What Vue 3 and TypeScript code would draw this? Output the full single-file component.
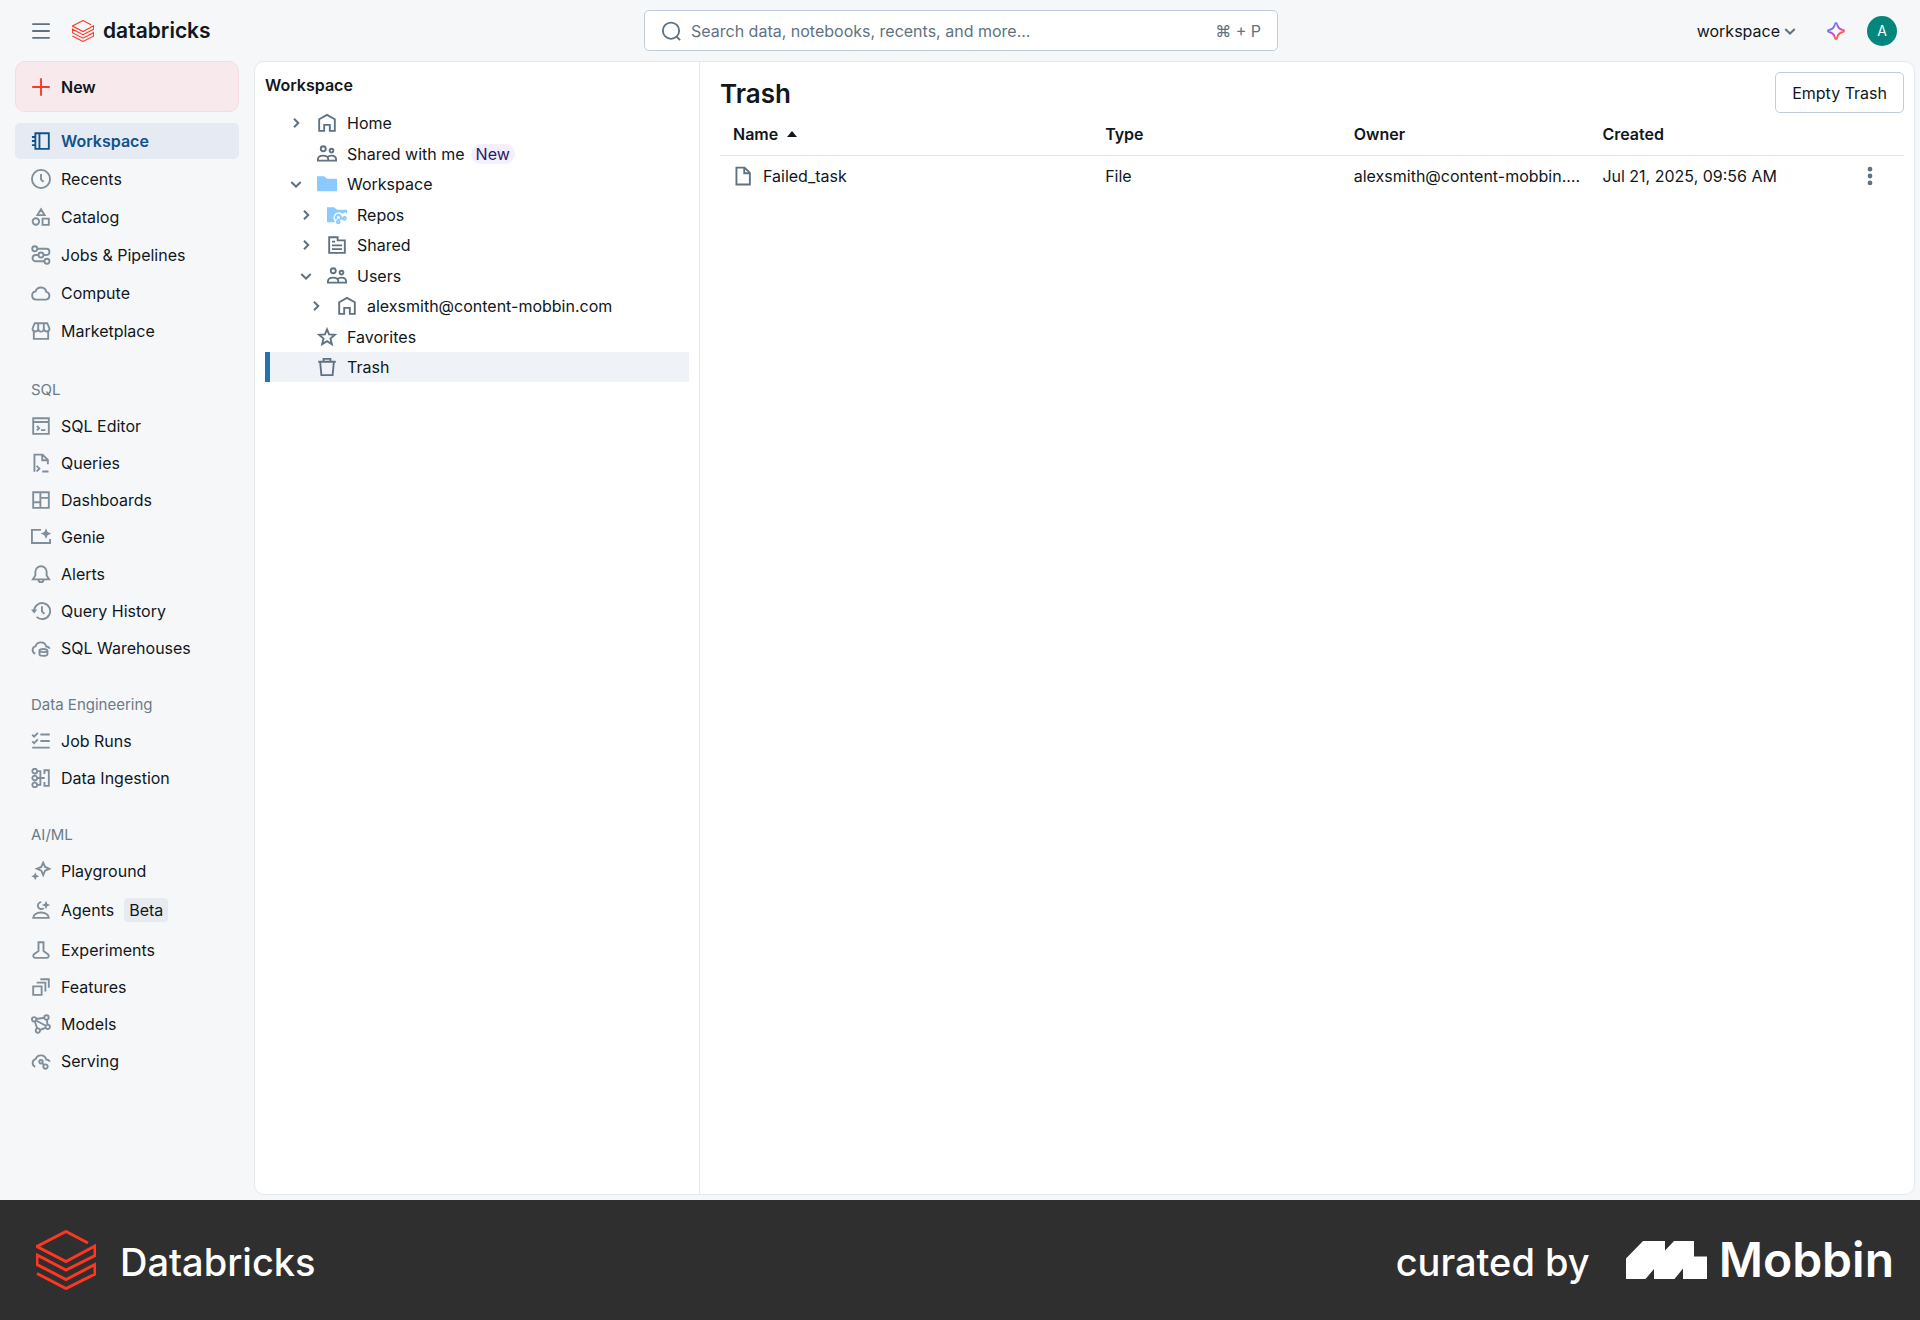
<script setup lang="ts">
import { ref } from 'vue'

interface Glyph {
  stroke?: string
  fill?: string
}
interface NavItem {
  label: string
  icon: string
  badge?: string
}
interface NavSection {
  title: string
  items: NavItem[]
}
interface TreeNode {
  label: string
  icon: string
  depth: number
  open?: boolean
  leaf?: boolean
  tag?: string
}

const ring = (cx: number, cy: number, r: number): string =>
  `M${cx - r} ${cy}a${r} ${r} 0 1 0 ${2 * r} 0a${r} ${r} 0 1 0 ${-2 * r} 0z`

const spark = (cx: number, cy: number, r: number): string => {
  const k = r * 0.3
  return `M${cx} ${cy - r}L${cx + k} ${cy - k}L${cx + r} ${cy}L${cx + k} ${cy + k}L${cx} ${cy + r}L${cx - k} ${cy + k}L${cx - r} ${cy}L${cx - k} ${cy - k}z`
}

const glyphs: Record<string, Glyph> = {
  menu: { stroke: 'M1 2.5h14M1 8h14M1 13.5h14' },
  plus: { stroke: 'M8 1v14M1 8h14' },
  notebook: { stroke: 'M3.5 1.75h10.75v12.5H3.5zM6.75 1.75v12.5M.75 4.75h2.5M.75 8h2.5M.75 11.25h2.5' },
  clock: { stroke: ring(8, 8, 7.25) + 'M8 4v4.25l2 2' },
  catalog: { stroke: 'M8 1.75l2.9 4.75H5.1z' + ring(3.9, 11.6, 2.6) + 'M9.25 9.25h5v5h-5z' },
  jobs: {
    stroke:
      ring(3, 3, 2) + ring(12.75, 13, 2) + ring(8, 8, 2) +
      'M5 3h7.25a2.5 2.5 0 0 1 0 5H10M6 8H3.75a2.5 2.5 0 0 0 0 5h7',
  },
  cloud: { stroke: 'M4 13.25a3.3 3.3 0 0 1-.3-6.55a4.45 4.45 0 0 1 8.6.45a3.1 3.1 0 0 1-.3 6.1z' },
  market: {
    stroke:
      'M3 1.75h10l1.75 4.25a2.25 2.25 0 0 1-4.5 .25a2.25 2.25 0 0 1-4.5 0a2.25 2.25 0 0 1-4.5-.25zM5.75 6.25v-4.5M10.25 6.25v-4.5M2.25 8.5v5.75h11.5V8.5',
  },
  editor: { stroke: 'M1.75 1.75h12.500v12.500H1.750zM1.750 4.750h12.500M4.750 8l1.750 1.750-1.750 1.750M8 11.250h3.500' },
  query: { stroke: 'M2.75 15V1.25h6.5l4.25 4.25V9M9 1.25v4.5h4.5M4.5 10.25L6.75 12.5 4.5 14.75M9 14.75h5' },
  dashboard: { stroke: 'M1.75 1.75h12.5v12.5H1.75zM7.5 1.75v12.5M1.75 9.75H7.5M7.5 6.25h6.75' },
  genie: { stroke: 'M8 2.25H.75v10.5h14.5V9.5', fill: spark(12, 5.25, 4.25) },
  bell: { stroke: 'M1.5 12.25h13l-2-3V6.25a4.5 4.5 0 0 0-9 0v3zM6 12.5a2 2 0 0 0 4 0' },
  history: { stroke: 'M2.5 8a6.4 6.4 0 1 1 2 4.7M8.75 4.25V8.25l2 2', fill: 'M0 6.75h5L2.5 10z' },
  warehouse: {
    stroke:
      'M3.4 12.6a3.2 3.2 0 0 1 .3-6.1a4.45 4.45 0 0 1 8.5.3a3.2 3.2 0 0 1 2.900 1.700M6.750 10a3.200 1.250 0 1 0 6.400 0a3.200 1.250 0 1 0-6.400 0v3a3.200 1.250 0 0 0 6.400 0v-3',
  },
  runs: { stroke: 'M7.5 2.75H15M7.5 8H15M1 13.25h14M1 3l1.5 1.5 3-3M1 8.25l1.5 1.5 3-3' },
  ingest: {
    stroke:
      ring(3, 2.5, 1.9) + ring(3, 8, 1.9) + ring(3, 13.5, 1.9) +
      'M5 2.5h2.5v11H5M5 8h6M10.75 4.75v-3h3.5v12.5h-3.5v-3',
  },
  playground: { stroke: spark(9.75, 6.25, 5), fill: spark(3.4, 12.25, 3.2) },
  agents: {
    stroke: 'M1.75 14.25h12.5c0-2.5-2.8-4.25-6.25-4.25S1.75 11.75 1.75 14.25zM8.25 1.75a2.75 2.75 0 1 0 1.9 4.7',
    fill: spark(12, 4, 3.4),
  },
  flask: {
    stroke:
      'M5.25 1.75h5.5M6 1.75v7L2.4 11.4a1.6 1.6 0 0 0 .9 2.85h9.4a1.6 1.6 0 0 0 .9-2.85L10 8.75v-7',
  },
  features: { stroke: 'M1.75 7.5h6.75v6.75H1.75zM4.5 4.5h7V11.5M7.5 1.75h6.75V8.5' },
  models: {
    stroke:
      ring(2.5, 4.25, 1.75) + ring(12.4, 2.75, 1.75) + ring(13.4, 10.25, 1.75) + ring(5.5, 13.25, 1.75) +
      'M4.2 4l6.5-1M12.7 4.5l.5 4M11.8 11l-4.6 1.7M3.1 6l1.8 5.6M4 5.2l7.9 4.2',
  },
  serving: {
    stroke:
      'M3.4 12.6a3.2 3.2 0 0 1 .3-6.1a4.45 4.45 0 0 1 8.5.3a3.2 3.2 0 0 1 2.9 1.7' +
      ring(8, 8.6, 1.4) + ring(11.6, 12.4, 1.75) + 'M9 9.7l1.3 1.4',
  },
  home: { stroke: 'M1.75 14.25V5L8 1.5 14.25 5v9.25h-4V9.5h-4.5v4.75z' },
  people: {
    stroke:
      ring(5, 3.75, 2) + ring(11.6, 5.25, 1.5) +
      'M.75 13.25v-1c0-1.75 1.7-3 4.1-3s4.15 1.25 4.15 3v1zM8.5 10.4c.8-.8 1.9-1.15 3-1.15 2.2 0 3.75 1.25 3.75 3v1H9',
  },
  folder: { fill: 'M0 1.75h5.75L8 3.75h8v10H0z' },
  repos: {
    fill: 'M0 1.75h5.75L8 3.75h8v3l-1.5-.9-2 1.2a4.3 4.3 0 0 0-7.3 3.2c0 1.6.7 2.700 1.600 3.500H0z',
    stroke: 'M7.6 11.3a2 2 0 1 1 3.2-.4l1.8-.1M9 11v1' + ring(9, 13.5, 1.1) + ring(14, 10.7, 1.1),
  },
  shared: { stroke: 'M1.75 1.75H8.5V4.25h5.75v10H1.75zM4 5.25h2.5M4 8.25h8M4 11.25h8' },
  star: { stroke: 'M8 1.9l1.65 4.05 4.6.35-3.5 2.95 1.1 4.5L8 11.3l-3.85 2.45 1.1-4.5-3.5-2.95 4.6-.35z' },
  trash: { stroke: 'M1 3.75h14M2.5 3.75l1 10.75h9l1-10.75M5.25 3.5V1.5h5.5v2' },
  file: { stroke: 'M2.75 1.25h6.5l4.25 4.25v9.25H2.75zM9 1.25v4.5h4.5' },
  search: { stroke: ring(8, 7.75, 6.5) + 'M12.4 12.4L15.3 15.3' },
  right: { stroke: 'M6 3.75L10.25 8 6 12.25' },
  down: { stroke: 'M3.25 6L8 10.5 12.75 6' },
  kebab: { fill: ring(8, 2.5, 1.9) + ring(8, 8, 1.9) + ring(8, 13.5, 1.9) },
}

const brick =
  'M52 13L30 1.5 1 16.5 30 31.5 59 16V25.5L30 40 1 25V34.5L30 49.5 59 34.5V44L30 58.5 1 43.5'

const primary: NavItem[] = [
  { label: 'Workspace', icon: 'notebook' },
  { label: 'Recents', icon: 'clock' },
  { label: 'Catalog', icon: 'catalog' },
  { label: 'Jobs & Pipelines', icon: 'jobs' },
  { label: 'Compute', icon: 'cloud' },
  { label: 'Marketplace', icon: 'market' },
]

const sections: NavSection[] = [
  {
    title: 'SQL',
    items: [
      { label: 'SQL Editor', icon: 'editor' },
      { label: 'Queries', icon: 'query' },
      { label: 'Dashboards', icon: 'dashboard' },
      { label: 'Genie', icon: 'genie' },
      { label: 'Alerts', icon: 'bell' },
      { label: 'Query History', icon: 'history' },
      { label: 'SQL Warehouses', icon: 'warehouse' },
    ],
  },
  {
    title: 'Data Engineering',
    items: [
      { label: 'Job Runs', icon: 'runs' },
      { label: 'Data Ingestion', icon: 'ingest' },
    ],
  },
  {
    title: 'AI/ML',
    items: [
      { label: 'Playground', icon: 'playground' },
      { label: 'Agents', icon: 'agents', badge: 'Beta' },
      { label: 'Experiments', icon: 'flask' },
      { label: 'Features', icon: 'features' },
      { label: 'Models', icon: 'models' },
      { label: 'Serving', icon: 'serving' },
    ],
  },
]

const tree: TreeNode[] = [
  { label: 'Home', icon: 'home', depth: 0 },
  { label: 'Shared with me', icon: 'people', depth: 0, leaf: true, tag: 'New' },
  { label: 'Workspace', icon: 'folder', depth: 0, open: true },
  { label: 'Repos', icon: 'repos', depth: 1 },
  { label: 'Shared', icon: 'shared', depth: 1 },
  { label: 'Users', icon: 'people', depth: 1, open: true },
  { label: 'alexsmith@content-mobbin.com', icon: 'home', depth: 2 },
  { label: 'Favorites', icon: 'star', depth: 0, leaf: true },
  { label: 'Trash', icon: 'trash', depth: 0, leaf: true },
]

const files = [
  { name: 'Failed_task', type: 'File', owner: 'alexsmith@content-mobbin.com', created: 'Jul 21, 2025, 09:56 AM' },
]

const activeNav = ref('Workspace')
const selected = ref('Trash')
const query = ref('')
</script>

<template>
  <div class="page">
    <div class="shell">
      <header class="topbar">
        <div class="brand">
          <button class="bare" type="button" aria-label="Toggle menu">
            <svg class="icon slate" viewBox="0 0 16 16"><path class="line" :d="glyphs.menu.stroke" /></svg>
          </button>
          <a class="wordmark" href="#">
            <svg class="mark" viewBox="0 0 60 60"><path :d="brick" /></svg>
            <span>databricks</span>
          </a>
        </div>
        <label class="search">
          <svg class="icon slate" viewBox="0 0 16 16"><path class="line" :d="glyphs.search.stroke" /></svg>
          <input v-model="query" type="text" aria-label="Search" placeholder="Search data, notebooks, recents, and more..." />
          <kbd>⌘ + P</kbd>
        </label>
        <div class="account">
          <button class="bare switcher" type="button">
            workspace
            <svg class="chevron" viewBox="0 0 16 16"><path class="line" :d="glyphs.down.stroke" /></svg>
          </button>
          <button class="bare" type="button" aria-label="Assistant">
            <svg class="icon assistant" viewBox="0 0 16 16">
              <defs>
                <linearGradient id="assistant-tint" x1="0" y1="0" x2="1" y2="1">
                  <stop offset="20%" stop-color="#4299e0" />
                  <stop offset="46%" stop-color="#ca42e0" />
                  <stop offset="75%" stop-color="#ff5f46" />
                </linearGradient>
              </defs>
              <path
                d="M8 1.5C8.6 1.5 8.8 2 9 3c.6 2.4 1.6 3.4 4 4 1 .2 1.5.4 1.5 1s-.5.8-1.5 1c-2.4.6-3.4 1.6-4 4-.2 1-.4 1.5-1 1.5s-.8-.5-1-1.5c-.6-2.4-1.6-3.4-4-4-1-.2-1.5-.4-1.5-1s.5-.8 1.5-1c2.4-.6 3.4-1.6 4-4 .2-1 .4-1.5 1-1.5z"
                fill="none"
                stroke="url(#assistant-tint)"
                stroke-width="1.5"
              />
            </svg>
          </button>
          <button class="avatar" type="button">A</button>
        </div>
      </header>

      <div class="body">
        <nav class="sidebar" aria-label="Main">
          <button class="create" type="button">
            <svg class="icon" viewBox="0 0 16 16"><path class="line" :d="glyphs.plus.stroke" /></svg>
            New
          </button>
          <ul class="links primary">
            <li v-for="item in primary" :key="item.label">
              <a href="#" :class="{ active: item.label === activeNav }" @click.prevent="activeNav = item.label">
                <svg class="icon" viewBox="0 0 16 16"><path class="line" :d="glyphs[item.icon].stroke" /></svg>
                {{ item.label }}
              </a>
            </li>
          </ul>
          <section v-for="section in sections" :key="section.title" class="group">
            <h2>{{ section.title }}</h2>
            <ul class="links">
              <li v-for="item in section.items" :key="item.label">
                <a
                  href="#"
                  :class="{ active: item.label === activeNav, badged: item.badge }"
                  @click.prevent="activeNav = item.label"
                >
                  <svg class="icon" viewBox="0 0 16 16">
                    <path v-if="glyphs[item.icon].stroke" class="line" :d="glyphs[item.icon].stroke" />
                    <path v-if="glyphs[item.icon].fill" class="solid" :d="glyphs[item.icon].fill" />
                  </svg>
                  {{ item.label }}
                  <span v-if="item.badge" class="badge">{{ item.badge }}</span>
                </a>
              </li>
            </ul>
          </section>
        </nav>

        <main class="panel">
          <aside class="browser">
            <h2>Workspace</h2>
            <ul class="tree">
              <li v-for="node in tree" :key="node.depth + node.label">
                <a
                  href="#"
                  :class="['depth-' + node.depth, { selected: node.label === selected }]"
                  @click.prevent="selected = node.label"
                >
                  <svg class="chevron" viewBox="0 0 16 16">
                    <path v-if="!node.leaf" class="line" :d="node.open ? glyphs.down.stroke : glyphs.right.stroke" />
                  </svg>
                  <svg :class="['icon', { tinted: !!glyphs[node.icon].fill }]" viewBox="0 0 16 16">
                    <path v-if="glyphs[node.icon].fill" class="solid" :d="glyphs[node.icon].fill" />
                    <path v-if="glyphs[node.icon].stroke" class="line" :d="glyphs[node.icon].stroke" />
                  </svg>
                  {{ node.label }}
                  <span v-if="node.tag" class="tag">{{ node.tag }}</span>
                </a>
              </li>
            </ul>
          </aside>

          <section class="content">
            <div class="heading">
              <h1>Trash</h1>
              <button class="outline" type="button">Empty Trash</button>
            </div>
            <table>
              <colgroup>
                <col />
                <col class="wide" />
                <col class="wide" />
                <col class="wide" />
                <col class="narrow" />
              </colgroup>
              <thead>
                <tr>
                  <th scope="col" aria-sort="ascending">Name <i class="caret"></i></th>
                  <th scope="col">Type</th>
                  <th scope="col">Owner</th>
                  <th scope="col">Created</th>
                  <th scope="col" aria-label="Actions"></th>
                </tr>
              </thead>
              <tbody>
                <tr v-for="file in files" :key="file.name">
                  <td>
                    <a class="file" href="#">
                      <svg class="icon slate" viewBox="0 0 16 16"><path class="line" :d="glyphs.file.stroke" /></svg>
                      {{ file.name }}
                    </a>
                  </td>
                  <td>{{ file.type }}</td>
                  <td>{{ file.owner }}</td>
                  <td>{{ file.created }}</td>
                  <td class="actions">
                    <button class="bare" type="button" aria-label="More actions">
                      <svg class="icon slate" viewBox="0 0 16 16"><path class="solid" :d="glyphs.kebab.fill" /></svg>
                    </button>
                  </td>
                </tr>
              </tbody>
            </table>
          </section>
        </main>
      </div>
    </div>

    <footer class="credit">
      <div class="product">
        <svg class="mark" viewBox="0 0 60 60"><path :d="brick" /></svg>
        <span>Databricks</span>
      </div>
      <div class="curator">
        <span>curated by</span>
        <svg class="mobbin" viewBox="0 0 81 38">
          <path d="M0 17.5L17 0H39V9.5L48 0H68V15.5H81V38H57V27.5L48.5 38H28V28L19.5 38H0z" />
        </svg>
        <strong>Mobbin</strong>
      </div>
    </footer>
  </div>
</template>

<style>
body {
  margin: 0;
  background: #f6f7f9;
}
</style>

<style scoped>
.page {
  display: flex;
  flex-direction: column;
  min-height: 100vh;
  font-family: Inter, 'Liberation Sans', sans-serif;
  font-size: 16px;
  line-height: 20px;
  color: #11171c;
  background: #f6f7f9;
}
.page * {
  box-sizing: border-box;
}
button,
input,
kbd {
  font: inherit;
  color: inherit;
}
a {
  color: inherit;
  text-decoration: none;
}
ul {
  list-style: none;
  margin: 0;
  padding: 0;
}
h1,
h2 {
  margin: 0;
}
.bare {
  display: flex;
  align-items: center;
  padding: 0;
  border: 0;
  background: none;
}
.icon {
  flex: none;
  width: 20px;
  height: 20px;
}
.line {
  fill: none;
  stroke: currentColor;
  stroke-width: 1.5;
}
.solid {
  fill: currentColor;
}
.slate {
  color: #5f7281;
}
.chevron {
  flex: none;
  width: 16px;
  height: 16px;
  color: #5f7281;
}
.chevron .line {
  stroke-width: 2;
}
.mark path {
  fill: none;
  stroke: #ff3621;
  stroke-width: 3;
}

.shell {
  flex: 1;
  display: flex;
  flex-direction: column;
  padding: 0 5px 5px 0;
}
.topbar {
  display: grid;
  grid-template-columns: 1fr 634px 1fr;
  align-items: center;
  height: 61px;
  padding: 0 18px 0 25px;
}
.brand,
.wordmark {
  display: flex;
  align-items: center;
}
.brand {
  gap: 21px;
  padding-left: 6px;
}
.wordmark {
  gap: 9px;
  font-size: 21px;
  font-weight: 600;
}
.wordmark .mark {
  width: 22px;
  height: 22px;
}
.search {
  display: flex;
  align-items: center;
  gap: 10px;
  height: 41px;
  padding: 0 16px;
  border: 1px solid #c0cdd8;
  border-radius: 5px;
  background: #fff;
  color: #5f7281;
}
.search input {
  flex: 1;
  padding: 0;
  border: 0;
  outline: 0;
  background: none;
}
.search input::placeholder {
  color: #5f7281;
  opacity: 1;
}
.account {
  display: flex;
  justify-content: flex-end;
  align-items: center;
}
.switcher {
  gap: 2px;
  margin-right: 28px;
}
.assistant {
  margin-right: 21px;
}
.avatar {
  width: 30px;
  height: 30px;
  padding: 0;
  border: 0;
  border-radius: 50%;
  background: #04867d;
  color: #fff;
  font-size: 14px;
}

.body {
  flex: 1;
  display: flex;
}
.sidebar {
  flex: none;
  width: 254px;
  padding: 0 15px;
}
.create {
  display: flex;
  align-items: center;
  gap: 10px;
  width: 100%;
  height: 51px;
  padding: 0 15px;
  border: 1px solid #f7dcdf;
  border-radius: 10px;
  background: #f8eaec;
  font-weight: 600;
}
.create .icon {
  color: #ff3621;
}
.links {
  display: flex;
  flex-direction: column;
  gap: 2px;
}
.links.primary {
  margin-top: 11px;
}
.links a {
  display: flex;
  align-items: center;
  gap: 10px;
  height: 35px;
  padding: 0 16px;
  border-radius: 5px;
}
.links.primary a {
  height: 36px;
}
.links .icon {
  color: #7f8e9b;
}
.links a.badged {
  height: 40px;
}
.links a.active {
  background: #e6ebf3;
  color: #0e538b;
  font-weight: 600;
}
.links a.active .icon {
  color: #0e538b;
}
.badge {
  padding: 2px 5px;
  border-radius: 4px;
  background: #e7eaee;
}
.primary + .group {
  margin-top: 22px;
}
.group {
  margin-top: 21px;
}
.group h2 {
  padding: 0 16px;
  font-size: 15px;
  line-height: 37px;
  font-weight: 400;
  color: #6a7b89;
}

.panel {
  flex: 1;
  display: flex;
  min-width: 0;
  border: 1px solid #e6e9ec;
  border-radius: 10px;
  background: #fff;
}
.browser {
  flex: none;
  width: 445px;
  padding: 13px 10px;
  border-right: 1px solid #e6e9ec;
}
.browser h2 {
  font-size: 16px;
  line-height: 20px;
  font-weight: 600;
}
.tree {
  display: flex;
  flex-direction: column;
  justify-content: space-between;
  height: 274px;
  margin-top: 13px;
}
.tree a {
  display: flex;
  align-items: center;
  height: 30px;
  padding-left: 18px;
  border-left: 5px solid transparent;
}
.tree a.depth-1 {
  padding-left: 28px;
}
.tree a.depth-2 {
  padding-left: 38px;
}
.tree a.selected {
  border-color: #2272b4;
  background: #eff3f8;
}
.tree .icon {
  margin: 0 10px 0 13px;
  color: #5f7281;
}
.tree .tinted {
  color: #8acaff;
}
.tag {
  margin-left: 6px;
  padding: 0 5px;
  border-radius: 10px;
  background: #f3effc;
  color: #2d1a64;
}

.content {
  flex: 1;
  min-width: 0;
  padding: 10px 10px 10px 20px;
}
.heading {
  display: flex;
  justify-content: space-between;
  align-items: center;
}
h1 {
  padding-top: 2px;
  font-size: 26px;
  line-height: 36px;
  font-weight: 600;
}
.outline {
  height: 41px;
  padding: 0 16px;
  border: 1px solid #c0cdd8;
  border-radius: 5px;
  background: #fff;
}
table {
  width: 100%;
  table-layout: fixed;
  border-collapse: collapse;
}
.wide {
  width: 21%;
}
.narrow {
  width: 66px;
}
th,
td {
  height: 42px;
  padding: 0 4px 0 13px;
  overflow: hidden;
  text-align: left;
  text-overflow: ellipsis;
  white-space: nowrap;
}
th {
  border-bottom: 1px solid #e0e5ea;
  font-weight: 600;
}
.caret {
  display: inline-block;
  margin-left: 5px;
  border: 5px solid transparent;
  border-top: 0;
  border-bottom: 6px solid #11171c;
  vertical-align: 3px;
}
.file {
  display: flex;
  align-items: center;
  gap: 10px;
}
.actions .bare {
  margin-left: 9px;
}

.credit {
  display: flex;
  justify-content: space-between;
  align-items: center;
  height: 120px;
  padding: 0 26px 0 36px;
  background: #2f2f2f;
  color: #fff;
  font-size: 38px;
  line-height: 48px;
  font-weight: 500;
}
.credit span {
  padding-top: 4px;
}
.product,
.curator {
  display: flex;
  align-items: center;
}
.product {
  gap: 24px;
}
.product .mark {
  width: 60px;
  height: 60px;
}
.mobbin {
  width: 81px;
  height: 38px;
  margin: 0 12px 0 36px;
  fill: #fff;
}
.curator strong {
  font-size: 48px;
  font-weight: 600;
}
</style>
